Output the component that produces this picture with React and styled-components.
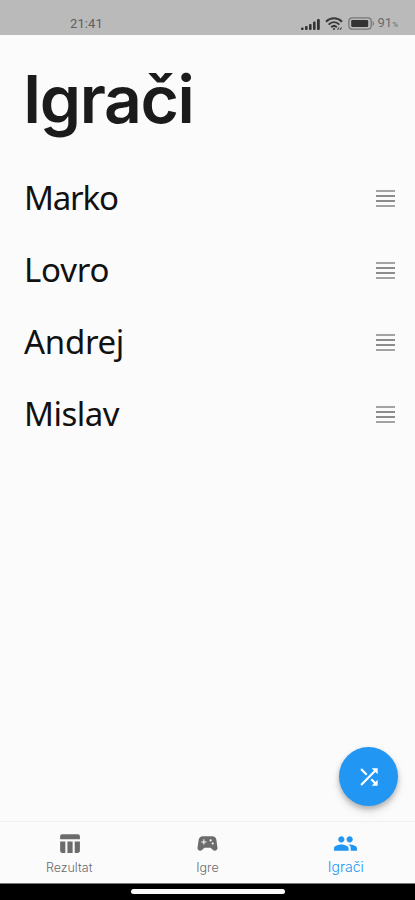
import React from 'react'
import styled, { createGlobalStyle } from 'styled-components'
import { MdShuffle, MdPeople, MdSportsEsports, MdTableChart } from 'react-icons/md'

const players = [
  { name: 'Marko', spacing: '-1.2px' },
  { name: 'Lovro', spacing: '-0.2px' },
  { name: 'Andrej', spacing: '-0.3px' },
  { name: 'Mislav', spacing: '-0.5px' },
]

const tabs = [
  { id: 0, label: 'Rezultat', icon: <MdTableChart /> },
  { id: 1, label: 'Igre', icon: <MdSportsEsports /> },
  { id: 2, label: 'Igrači', icon: <MdPeople />, active: true },
]

const SignalIcon = () => (
  <svg width="19" height="12" viewBox="0 0 19 12" fill="#333">
    <rect x="0" y="9.5" width="2.6" height="2.5" rx="1" />
    <rect x="4" y="8" width="2.6" height="4" rx="1" />
    <rect x="8" y="6" width="2.6" height="6" rx="1" />
    <rect x="12" y="3.5" width="2.6" height="8.5" rx="1" />
    <rect x="16" y="1" width="2.8" height="11" rx="1" />
  </svg>
)

const WifiIcon = () => (
  <svg width="18" height="14" viewBox="0 0 18 14" fill="none" stroke="#3a3a3a" strokeWidth="2">
    <path d="M1 4.8C5.5 0.2 12.5 0.2 17 4.8" />
    <path d="M3.6 7.6C6.8 4.5 11.2 4.5 14.4 7.6" />
    <path d="M6.2 10.2C7.9 8.6 10.1 8.6 11.8 10.2" />
    <circle cx="9" cy="12" r="1.1" fill="#3a3a3a" stroke="none" />
    <path d="M12.5 12.8l1.5-2.3M15 12.8l1.5-2.3" strokeWidth="1.1" />
  </svg>
)

const BatteryIcon = () => (
  <svg width="27" height="13" viewBox="0 0 27 13">
    <rect x="0.8" y="0.8" width="22.4" height="11.4" rx="3.4" fill="none" stroke="#777" strokeWidth="1.3" />
    <rect x="3.2" y="3" width="17" height="7" rx="1.2" fill="#333" />
    <path d="M24.6 4c1.7 0.6 1.7 4.4 0 5z" fill="#777" />
  </svg>
)

const App = () => {
  return (
    <Screen>
      <GlobalStyle />
      <StatusBar>
        <Clock>21:41</Clock>
        <Indicators>
          <SignalIcon />
          <WifiIcon />
          <BatteryIcon />
          <Charge>
            91<small>%</small>
          </Charge>
        </Indicators>
      </StatusBar>
      <Content>
        <Title>Igrači</Title>
        <PlayerList>
          {players.map(player => (
            <Player key={player.name}>
              <PlayerName $spacing={player.spacing}>{player.name}</PlayerName>
              <DragHandle>
                <i />
                <i />
                <i />
                <i />
              </DragHandle>
            </Player>
          ))}
        </PlayerList>
        <ShuffleButton aria-label="shuffle">
          <MdShuffle />
        </ShuffleButton>
      </Content>
      <TabBar>
        {tabs.map(tab => (
          <Tab key={tab.id} $active={tab.active}>
            {tab.icon}
            <span>{tab.label}</span>
          </Tab>
        ))}
      </TabBar>
      <HomeBar>
        <HomeHandle />
      </HomeBar>
    </Screen>
  )
}

const GlobalStyle = createGlobalStyle`
  * {
    box-sizing: border-box;
  }
  body {
    margin: 0;
    font-family: Inter, 'Noto Sans', sans-serif;
  }
`
const Screen = styled.div`
  width: 415px;
  height: 900px;
  display: flex;
  flex-direction: column;
  overflow: hidden;
  background: #fbfbfb;
`
const StatusBar = styled.header`
  flex: none;
  height: 35px;
  padding: 11px 17px 0 70px;
  display: flex;
  justify-content: space-between;
  background: #bababa;
  font-family: Roboto, sans-serif;
`
const Clock = styled.div`
  font-size: 13px;
  line-height: 25px;
  letter-spacing: 0.1px;
  color: #606060;
`
const Indicators = styled.div`
  height: 25px;
  display: flex;
  align-items: center;
  gap: 5px;
`
const Charge = styled.div`
  margin-left: -2px;
  font-size: 13px;
  line-height: 25px;
  color: #6a6a6a;

  small {
    font-size: 8px;
  }
`
const Content = styled.main`
  flex: 1;
  position: relative;
`
const Title = styled.h1`
  margin: 0;
  padding: 24px 0 0 23px;
  height: 127px;
  font-size: 66px;
  font-weight: 600;
  line-height: 80px;
  letter-spacing: -1.4px;
  color: #1b1b1b;
`
const PlayerList = styled.ul`
  margin: 0;
  padding: 0;
  list-style: none;
`
const Player = styled.li`
  height: 72px;
  padding: 0 20px 0 24px;
  display: flex;
  align-items: center;
  justify-content: space-between;
`
const PlayerName = styled.span`
  font-family: 'Noto Sans', sans-serif;
  font-size: 33px;
  line-height: 44px;
  letter-spacing: ${({ $spacing }) => $spacing};
  color: #111;
`
const DragHandle = styled.span`
  width: 19px;
  display: flex;
  flex-direction: column;
  gap: 3px;

  i {
    height: 2px;
    background: #a3a3a3;
  }
  i:nth-child(2),
  i:nth-child(3) {
    background: #8c8c8c;
  }
`
const ShuffleButton = styled.button`
  position: absolute;
  right: 17px;
  bottom: 15px;
  width: 59px;
  height: 59px;
  padding: 0;
  display: flex;
  align-items: center;
  justify-content: center;
  border: 0;
  border-radius: 50%;
  color: #fff;
  font-size: 26px;
  background: #2196f3;
  box-shadow: 0 3px 5px rgba(0, 0, 0, 0.22), 0 5px 10px rgba(0, 0, 0, 0.12);
`
const TabBar = styled.nav`
  flex: none;
  height: 62px;
  display: flex;
  border-top: 1px solid #f0f0f0;
`
const Tab = styled.div`
  flex: 1;
  padding-top: 9px;
  display: flex;
  flex-direction: column;
  align-items: center;
  color: ${({ $active }) => ($active ? '#2196f3' : '#6c6c6c')};

  svg {
    font-size: 25px;
  }
  span {
    font-size: ${({ $active }) => ($active ? '14px' : '12.5px')};
    font-weight: 300;
    line-height: ${({ $active }) => ($active ? '22px' : '23px')};
  }
`
const HomeBar = styled.footer`
  flex: none;
  height: 17px;
  padding-top: 5px;
  display: flex;
  justify-content: center;
  border-top: 1px solid #777;
  background: #000;
`
const HomeHandle = styled.div`
  width: 154px;
  height: 5px;
  border-radius: 3px;
  background: #fafafa;
`

export default App
